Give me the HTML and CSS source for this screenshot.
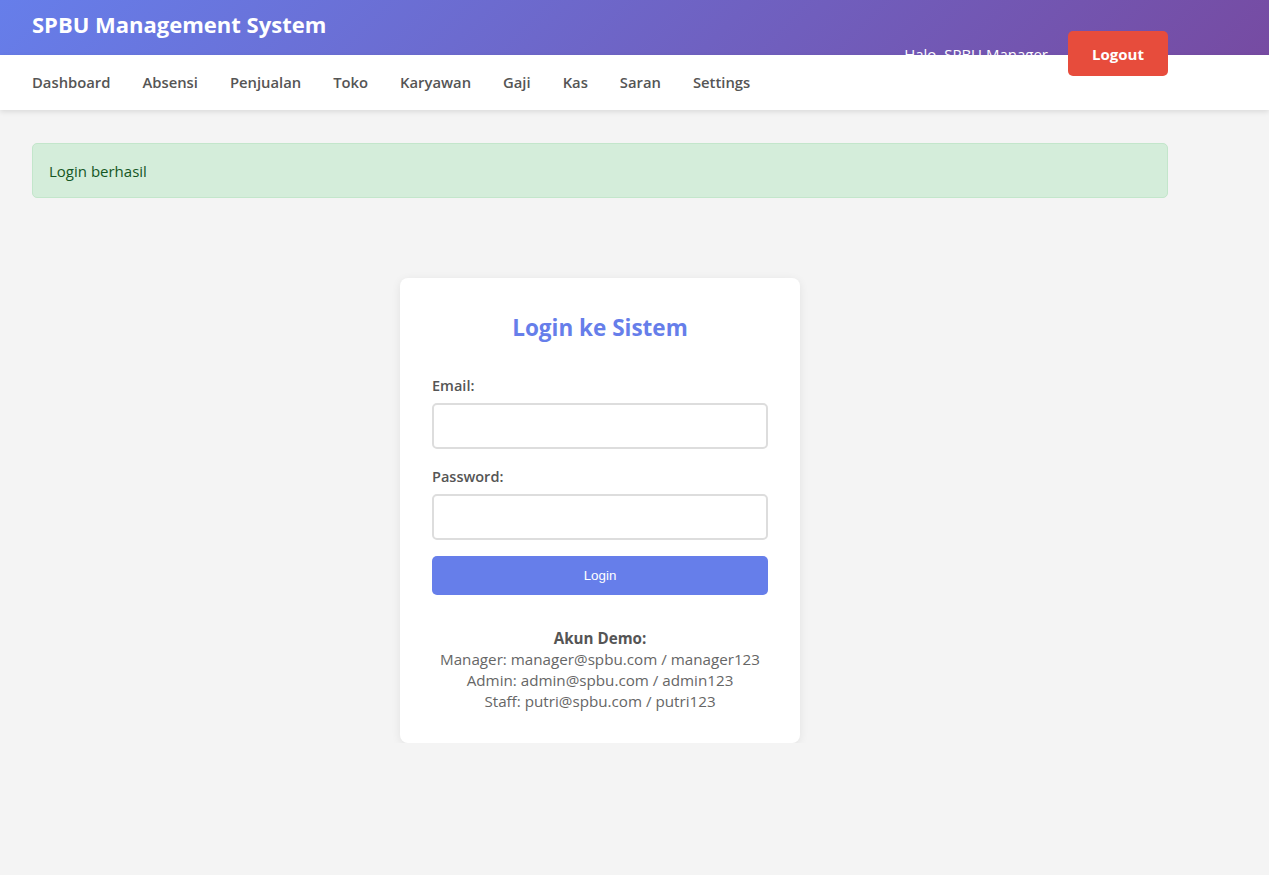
FILE: index.html
```html
<!DOCTYPE html>
<html lang="id">
<head>
<meta charset="utf-8">
<title>SPBU Management System</title>
<link rel="stylesheet" href="styles.css">
</head>
<body>
<header class="topbar">
  <div class="container topbar-inner">
    <h1 class="brand">SPBU Management System</h1>
    <div class="user-info">
      <span class="greeting">Halo, SPBU Manager</span>
      <button class="btn-logout">Logout</button>
    </div>
  </div>
</header>
<nav class="navbar">
  <div class="container nav-inner">
    <a href="#" class="nav-link">Dashboard</a>
    <a href="#" class="nav-link">Absensi</a>
    <a href="#" class="nav-link">Penjualan</a>
    <a href="#" class="nav-link">Toko</a>
    <a href="#" class="nav-link">Karyawan</a>
    <a href="#" class="nav-link">Gaji</a>
    <a href="#" class="nav-link">Kas</a>
    <a href="#" class="nav-link">Saran</a>
    <a href="#" class="nav-link">Settings</a>
  </div>
</nav>
<main class="container main">
  <div class="alert-success">Login berhasil</div>
  <section class="login-card">
    <h2 class="login-title">Login ke Sistem</h2>
    <form class="login-form">
      <div class="form-group">
        <label class="form-label">Email:</label>
        <input class="form-input" type="email">
      </div>
      <div class="form-group">
        <label class="form-label">Password:</label>
        <input class="form-input" type="password">
      </div>
      <button type="button" class="btn-login">Login</button>
    </form>
    <div class="demo">
      <strong class="demo-title">Akun Demo:</strong>
      <div>Manager: manager@spbu.com / manager123</div>
      <div>Admin: admin@spbu.com / admin123</div>
      <div>Staff: putri@spbu.com / putri123</div>
    </div>
  </section>
</main>
</body>
</html>
```

FILE: styles.css
```css
* { box-sizing: border-box; }

body {
  margin: 0;
  background: #f4f4f4;
  font-family: "Open Sans", "Noto Sans", sans-serif;
  color: #333;
}

.container {
  max-width: 1200px;
  padding: 0 32px;
}

.topbar {
  height: 55px;
  background: linear-gradient(135deg, #667eea 0%, #764ba2 100%);
  color: #fff;
}

.topbar-inner {
  display: flex;
  justify-content: space-between;
  align-items: flex-start;
  height: 55px;
}

.brand {
  margin: 0;
  padding-top: 10px;
  font-size: 22px;
  line-height: 29px;
  font-weight: 700;
}

.user-info {
  display: flex;
  align-items: center;
  gap: 20px;
  margin-top: 31px;
}

.greeting {
  font-size: 15px;
  color: #fff;
}

.btn-logout {
  height: 45px;
  width: 100px;
  padding-top: 2px;
  border: none;
  border-radius: 5px;
  background: #e74c3c;
  color: #fff;
  font-family: inherit;
  font-size: 15px;
  font-weight: 700;
  cursor: pointer;
}

.navbar {
  background: #fff;
  box-shadow: 0 2px 5px rgba(0, 0, 0, 0.1);
}

.nav-inner {
  display: flex;
  gap: 32px;
  height: 55px;
  align-items: center;
  padding-bottom: 1px;
}

.nav-link {
  color: #555;
  text-decoration: none;
  font-size: 14.8px;
  font-weight: 600;
}

.main {
  padding-top: 33px;
}

.alert-success {
  height: 55px;
  display: flex;
  align-items: center;
  padding: 0 16px;
  background: #d4edda;
  border: 1px solid #c3e6cb;
  border-radius: 5px;
  color: #155724;
  font-size: 15px;
}

.login-card {
  width: 400px;
  margin: 80px auto 0;
  padding: 32px 32px 31px;
  background: #fff;
  border-radius: 8px;
  box-shadow: 0 2px 10px rgba(0, 0, 0, 0.08);
}

.login-title {
  margin: 0 0 29px;
  text-align: center;
  color: #667eea;
  font-size: 22.5px;
  line-height: 36px;
  font-weight: 700;
}

.form-group {
  margin-bottom: 17px;
}

.form-label {
  display: block;
  margin-bottom: 8px;
  color: #555;
  font-size: 14.5px;
  line-height: 21px;
  font-weight: 600;
}

.form-input {
  display: block;
  width: 100%;
  height: 46px;
  margin-top: -1px;
  border: 2px solid #ddd;
  border-radius: 5px;
  background: #fff;
  font-size: 15px;
}

.btn-login {
  display: block;
  width: 100%;
  height: 39px;
  margin-top: -1px;
  border: none;
  border-radius: 5px;
  background: #667eea;
  color: #fff;
  font-family: "Liberation Sans", Arial, sans-serif;
  font-size: 13.33px;
  cursor: pointer;
}

.demo {
  margin-top: 33px;
  text-align: center;
  color: #666;
  font-size: 15.2px;
  line-height: 21px;
}

.demo-title {
  display: block;
  color: #555;
}
```
